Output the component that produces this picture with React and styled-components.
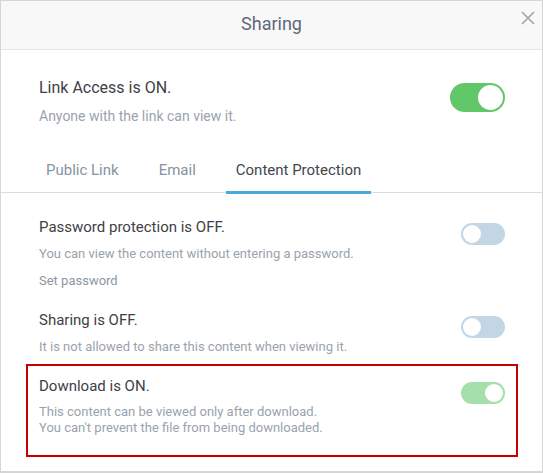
import React from "react";
import styled, { createGlobalStyle } from "styled-components";

const GlobalStyle = createGlobalStyle`
  html, body {
    margin: 0;
    padding: 0;
    background: #ffffff;
  }
  body {
    font-family: Roboto, "Liberation Sans", Arial, sans-serif;
  }
`;

const Dialog = styled.div`
  box-sizing: border-box;
  width: 543px;
  height: 473px;
  border: 1px solid #d6d6d6;
  border-bottom-width: 2px;
  background: #ffffff;
  display: flex;
  flex-direction: column;
`;

const Header = styled.div`
  position: relative;
  height: 48px;
  background: #f8f8f8;
  border-bottom: 1px solid #e6e6e6;
  display: flex;
  align-items: center;
  justify-content: center;
`;

const Title = styled.div`
  font-size: 18px;
  color: #5d6a79;
  margin-top: -4px;
`;

const Close = styled.button`
  position: absolute;
  top: 10px;
  right: 7px;
  width: 14px;
  height: 14px;
  padding: 0;
  border: 0;
  background: none;
  display: flex;
  cursor: pointer;
`;

const Intro = styled.div`
  display: flex;
  justify-content: space-between;
  align-items: flex-start;
  padding: 28px 37px 0 38px;
`;

const TextCol = styled.div`
  display: flex;
  flex-direction: column;
`;

const Heading = styled.div`
  font-size: ${(p) => (p.large ? 16 : 15)}px;
  line-height: 20px;
  color: #3e4146;
`;

const Note = styled.div`
  font-size: ${(p) => (p.large ? 14 : 13)}px;
  line-height: 16px;
  color: #9aa3ad;
  margin-top: ${(p) => p.gap || 0}px;
`;

const Link = styled.div`
  font-size: 13px;
  line-height: 16px;
  color: #8c97a3;
  margin-top: 11px;
  cursor: pointer;
`;

const Track = styled.div`
  box-sizing: border-box;
  flex: none;
  width: ${(p) => (p.big ? 55 : 44)}px;
  height: ${(p) => (p.big ? 29 : 22)}px;
  border-radius: 15px;
  padding: 2px;
  margin-top: ${(p) => (p.big ? 5 : 6)}px;
  background: ${(p) => p.color};
  display: flex;
  justify-content: ${(p) => (p.on ? "flex-end" : "flex-start")};
`;

const Knob = styled.div`
  width: ${(p) => (p.big ? 25 : 18)}px;
  height: ${(p) => (p.big ? 25 : 18)}px;
  border-radius: 50%;
  background: #ffffff;
`;

const Tabs = styled.div`
  display: flex;
  gap: 20px;
  margin-top: 26px;
  padding-left: 35px;
  border-bottom: 1px solid #dcdcdc;
`;

const Tab = styled.div`
  font-size: 15px;
  line-height: 20px;
  padding: 10px 10px 11px;
  margin-bottom: -2px;
  color: ${(p) => (p.active ? "#43474d" : "#8693a1")};
  border-bottom: 3px solid ${(p) => (p.active ? "#4aa8d8" : "transparent")};
  cursor: pointer;
`;

const Options = styled.div`
  display: flex;
  flex-direction: column;
  padding: 12px 24px 0 25px;
`;

const Row = styled.div`
  display: flex;
  justify-content: space-between;
  align-items: flex-start;
  padding: 10px 11px ${(p) => (p.highlight ? 19 : 7)}px;
  border: 2px solid ${(p) => (p.highlight ? "#c40000" : "transparent")};
`;

const Toggle = ({ on, big, color }) => (
  <Track on={on} big={big} color={color}>
    <Knob big={big} />
  </Track>
);

export default function App() {
  return (
    <>
      <GlobalStyle />
      <Dialog>
        <Header>
          <Title>Sharing</Title>
          <Close aria-label="Close">
            <svg width="14" height="14" viewBox="0 0 14 14">
              <path d="M1 1 L13 13 M13 1 L1 13" stroke="#9aa6b4" strokeWidth="1.6" />
            </svg>
          </Close>
        </Header>

        <Intro>
          <TextCol>
            <Heading large>Link Access is ON.</Heading>
            <Note large gap={10}>Anyone with the link can view it.</Note>
          </TextCol>
          <Toggle on big color="#62c768" />
        </Intro>

        <Tabs>
          <Tab>Public Link</Tab>
          <Tab>Email</Tab>
          <Tab active>Content Protection</Tab>
        </Tabs>

        <Options>
          <Row>
            <TextCol>
              <Heading>Password protection is OFF.</Heading>
              <Note gap={9}>You can view the content without entering a password.</Note>
              <Link>Set password</Link>
            </TextCol>
            <Toggle color="#c2d6e3" />
          </Row>
          <Row>
            <TextCol>
              <Heading>Sharing is OFF.</Heading>
              <Note gap={9}>It is not allowed to share this content when viewing it.</Note>
            </TextCol>
            <Toggle color="#c2d6e3" />
          </Row>
          <Row highlight>
            <TextCol>
              <Heading>Download is ON.</Heading>
              <Note gap={8}>This content can be viewed only after download.</Note>
              <Note>You can't prevent the file from being downloaded.</Note>
            </TextCol>
            <Toggle on color="#a5dfa9" />
          </Row>
        </Options>
      </Dialog>
    </>
  );
}
